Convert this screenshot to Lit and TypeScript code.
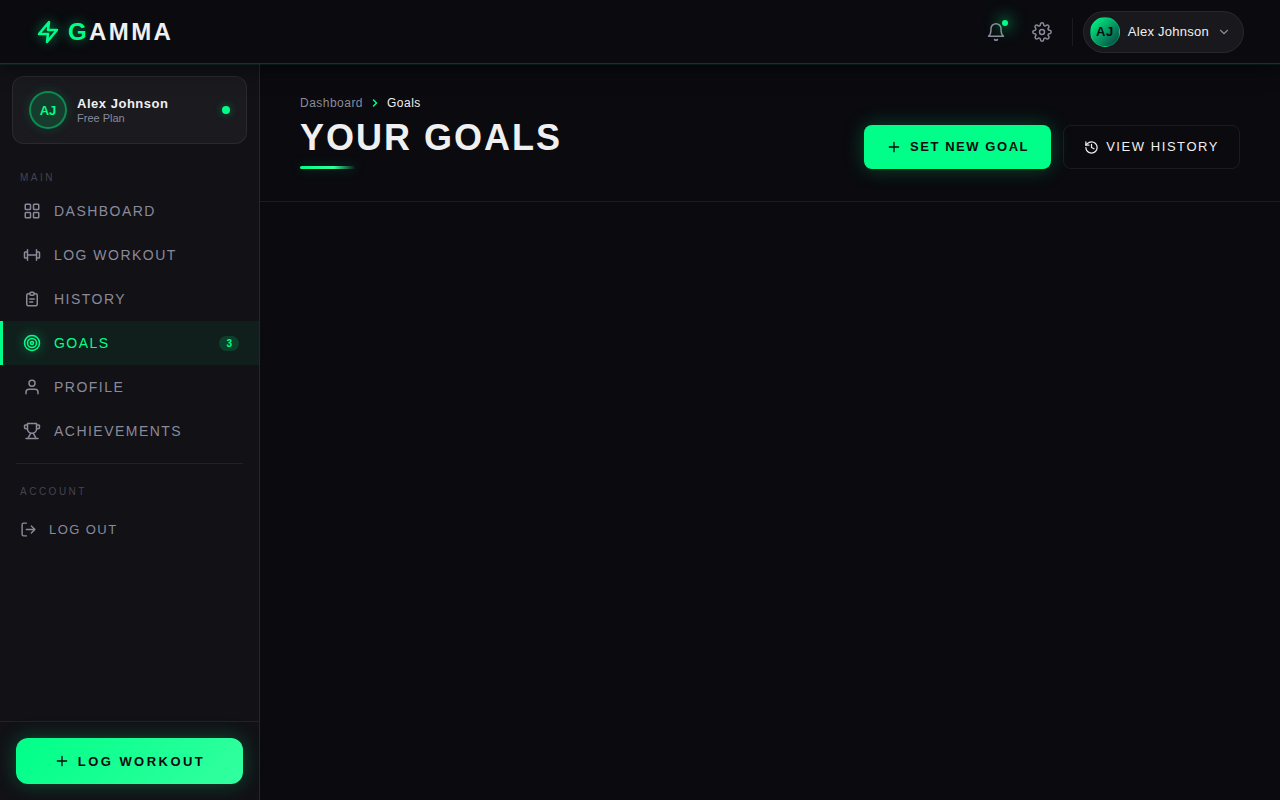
import { LitElement, html, css, svg, nothing } from "lit";
import { customElement, property, state } from "lit/decorators.js";
import { classMap } from "lit/directives/class-map.js";

const icons: Record<string, unknown> = {
  bolt: svg`<path d="M13 2 3 14h9l-1 8 10-12h-9l1-8z"/>`,
  bell: svg`<path d="M18 8A6 6 0 0 0 6 8c0 7-3 9-3 9h18s-3-2-3-9"/><path d="M13.73 21a2 2 0 0 1-3.46 0"/>`,
  gear: svg`<circle cx="12" cy="12" r="3"/><path d="M19.4 15a1.65 1.65 0 0 0 .33 1.82l.06.06a2 2 0 0 1 0 2.83 2 2 0 0 1-2.83 0l-.06-.06a1.65 1.65 0 0 0-1.82-.33 1.65 1.65 0 0 0-1 1.51V21a2 2 0 0 1-2 2 2 2 0 0 1-2-2v-.09A1.65 1.65 0 0 0 9 19.4a1.65 1.65 0 0 0-1.82.33l-.06.06a2 2 0 0 1-2.83 0 2 2 0 0 1 0-2.83l.06-.06a1.65 1.65 0 0 0 .33-1.82 1.65 1.65 0 0 0-1.51-1H3a2 2 0 0 1-2-2 2 2 0 0 1 2-2h.09A1.65 1.65 0 0 0 4.6 9a1.65 1.65 0 0 0-.33-1.82l-.06-.06a2 2 0 0 1 0-2.83 2 2 0 0 1 2.83 0l.06.06a1.65 1.65 0 0 0 1.82.33H9a1.65 1.65 0 0 0 1-1.51V3a2 2 0 0 1 2-2 2 2 0 0 1 2 2v.09a1.65 1.65 0 0 0 1 1.51 1.65 1.65 0 0 0 1.82-.33l.06-.06a2 2 0 0 1 2.83 0 2 2 0 0 1 0 2.83l-.06.06a1.65 1.65 0 0 0-.33 1.82V9a1.65 1.65 0 0 0 1.51 1H21a2 2 0 0 1 2 2 2 2 0 0 1-2 2h-.09a1.65 1.65 0 0 0-1.51 1z"/>`,
  down: svg`<path d="m6 9 6 6 6-6"/>`,
  right: svg`<path d="m9 18 6-6-6-6"/>`,
  grid: svg`<rect x="3" y="3" width="7" height="7" rx="1"/><rect x="14" y="3" width="7" height="7" rx="1"/><rect x="3" y="14" width="7" height="7" rx="1"/><rect x="14" y="14" width="7" height="7" rx="1"/>`,
  dumbbell: svg`<path d="M6 5v14M18 5v14M6 12h12M6 8H3a1 1 0 0 0-1 1v6a1 1 0 0 0 1 1h3M18 8h3a1 1 0 0 1 1 1v6a1 1 0 0 1-1 1h-3"/>`,
  clipboard: svg`<path d="M9 5H7a2 2 0 0 0-2 2v12a2 2 0 0 0 2 2h10a2 2 0 0 0 2-2V7a2 2 0 0 0-2-2h-2"/><rect x="9" y="3" width="6" height="4" rx="2"/><path d="M9 12h6M9 16h4"/>`,
  target: svg`<circle cx="12" cy="12" r="10"/><circle cx="12" cy="12" r="6"/><circle cx="12" cy="12" r="2"/>`,
  user: svg`<path d="M20 21v-2a4 4 0 0 0-4-4H8a4 4 0 0 0-4 4v2"/><circle cx="12" cy="7" r="4"/>`,
  trophy: svg`<path d="M6 4H3a1 1 0 0 0-1 1v2a2 2 0 0 0 2 2h2M18 4h3a1 1 0 0 1 1 1v2a2 2 0 0 1-2 2h-2M4 22h16M10 15c0 3-3 3-3 7M14 15c0 3 3 3 3 7M18 2H6v7a6 6 0 0 0 12 0V2z"/>`,
  logout: svg`<path d="M9 21H5a2 2 0 0 1-2-2V5a2 2 0 0 1 2-2h4"/><path d="m16 17 5-5-5-5M21 12H9"/>`,
  plus: svg`<path d="M12 5v14M5 12h14"/>`,
  history: svg`<path d="M3 12a9 9 0 1 0 9-9 9.750 9.750 0 0 0-6.740 2.740L3 8"/><path d="M3 3v5h5M12 7v5l4 2"/>`,
};

@customElement("ui-icon")
class UiIcon extends LitElement {
  @property() name = "";
  @property({ type: Number }) size = 18;
  @property({ type: Number }) weight = 2;

  static styles = css`
    :host { display: inline-flex; flex: none; }
    svg { display: block; fill: none; stroke: currentColor; stroke-linecap: round; stroke-linejoin: round; }
  `;

  render() {
    return html`<svg width=${this.size} height=${this.size} viewBox="0 0 24 24" stroke-width=${this.weight} aria-hidden="true">${icons[this.name]}</svg>`;
  }
}

const links = [
  { id: "dashboard", label: "Dashboard", icon: "grid" },
  { id: "log", label: "Log Workout", icon: "dumbbell" },
  { id: "history", label: "History", icon: "clipboard" },
  { id: "goals", label: "Goals", icon: "target", count: 3 },
  { id: "profile", label: "Profile", icon: "user" },
  { id: "achievements", label: "Achievements", icon: "trophy" },
];

@customElement("app-root")
class AppRoot extends LitElement {
  @state() current = "goals";

  static styles = css`
    :host {
      --neon: #00ff88;
      --bg: #0a0a0f;
      --panel: #111116;
      --text: #f0f0f0;
      --muted: #8a8a9a;
      --line: rgba(255, 255, 255, 0.07);
      display: grid;
      grid-template: auto 1fr / 260px 1fr;
      min-height: 100vh;
      background: var(--bg);
      color: var(--text);
      font-family: "Liberation Sans", Arial, sans-serif;
      font-size: 13px;
    }
    * { box-sizing: border-box; }
    a { color: inherit; text-decoration: none; }
    button { font: inherit; color: inherit; border: 0; background: none; padding: 0; cursor: pointer; }

    .topbar {
      grid-column: 1 / -1;
      z-index: 1;
      display: flex;
      align-items: center;
      justify-content: space-between;
      height: 64px;
      padding: 0 36px;
      background: var(--bg);
      border-bottom: 1px solid rgba(0, 255, 136, 0.2);
      box-shadow: 0 1px 0 rgba(0, 255, 136, 0.07), 0 4px 24px rgba(0, 0, 0, 0.4);
    }
    .brand { display: flex; align-items: center; gap: 8px; font-size: 24px; font-weight: 700; letter-spacing: 0.1em; }
    .brand ui-icon { color: var(--neon); filter: drop-shadow(0 0 6px rgba(0, 255, 136, 0.6)); }
    .brand .first { color: var(--neon); text-shadow: 0 0 12px rgba(0, 255, 136, 0.5); }
    .tools { display: flex; align-items: center; gap: 6px; }
    .tool { position: relative; display: grid; place-items: center; width: 40px; height: 40px; color: var(--muted); }
    .alert {
      position: absolute; top: 8px; right: 8px; width: 6px; height: 6px; border-radius: 50%;
      background: var(--neon); box-shadow: 0 0 16px 4px rgba(0, 255, 136, 0.4), 0 0 8px rgba(0, 255, 136, 0.3);
    }
    .rule { width: 1px; height: 28px; margin: 0 4px; background: var(--line); }
    .account {
      display: flex; align-items: center; gap: 8px; padding: 5px 12px 5px 6px;
      border: 1px solid var(--line); border-radius: 24px; background: #18181d; letter-spacing: 0.02em;
    }
    .account > ui-icon { color: var(--muted); }
    .avatar {
      display: grid; place-items: center; width: 30px; height: 30px; border-radius: 50%;
      background: linear-gradient(135deg, var(--neon), #0a3a3f);
      border: 1px solid rgba(0, 255, 136, 0.3);
      color: var(--bg); font-weight: 700; letter-spacing: 0.04em;
    }

    .sidebar {
      display: flex; flex-direction: column; background: var(--panel);
      border-right: 1px solid rgba(0, 255, 136, 0.15);
    }
    .card {
      display: flex; align-items: center; gap: 10px; margin: 12px; padding: 14px 16px;
      background: #1a1a1f; border: 1px solid var(--line); border-radius: 12px;
    }
    .card .avatar {
      width: 38px; height: 38px; color: var(--neon); letter-spacing: 0;
      background: rgba(0, 255, 136, 0.15); border: 2px solid rgba(0, 255, 136, 0.4);
      box-shadow: 0 0 12px rgba(0, 255, 136, 0.15);
    }
    .person { flex: 1; display: grid; }
    .name { font-weight: 700; letter-spacing: 0.04em; line-height: 15px; }
    .plan { font-size: 11px; line-height: 14px; color: var(--muted); }
    .online { width: 8px; height: 8px; border-radius: 50%; background: var(--neon); box-shadow: 0 0 8px rgba(0, 255, 136, 0.4); }

    .heading { margin: 0; padding: 16px 20px 5px; font-size: 10px; font-weight: 400; line-height: 12px; letter-spacing: 0.25em; text-transform: uppercase; color: #44444f; }
    .link {
      display: flex; align-items: center; gap: 13px; height: 44px; padding: 0 20px;
      border-left: 3px solid transparent; color: var(--muted);
      font-size: 14px; letter-spacing: 0.105em; text-transform: uppercase;
    }
    .link.on { color: var(--neon); background: rgba(0, 255, 136, 0.06); border-left-color: var(--neon); }
    .link.on ui-icon { filter: drop-shadow(0 0 6px rgba(0, 255, 136, 0.5)); }
    .count {
      margin-left: auto; padding: 0 7px; border-radius: 8px; font-size: 10px; font-weight: 700; line-height: 15px;
      letter-spacing: 0; background: rgba(0, 255, 136, 0.15);
    }
    .split { height: 1px; margin: 10px 16px 6px; border: 0; background: var(--line); }
    .logout {
      display: flex; align-items: center; gap: 12px; width: 100%; height: 44px; padding: 0 20px;
      margin-top: 4px; color: var(--muted); letter-spacing: 0.11em; text-transform: uppercase;
    }
    .bottom { margin-top: auto; padding: 16px; border-top: 1px solid var(--line); }

    .button {
      display: flex; align-items: center; justify-content: center; gap: 8px; height: 44px; padding: 0 22px;
      border-radius: 8px; line-height: 16px; letter-spacing: 0.12em; text-transform: uppercase; white-space: nowrap;
    }
    .primary { background: var(--neon); color: var(--bg); font-weight: 700; box-shadow: 0 0 20px rgba(0, 255, 136, 0.25); }
    .outline { gap: 7px; padding: 0 20px; border: 1px solid var(--line); }
    .wide {
      width: 100%; height: 46px; border-radius: 12px; line-height: 15px; letter-spacing: 0.19em;
      background: linear-gradient(135deg, var(--neon), #33ffa0);
    }

    .page-head {
      display: flex; flex-wrap: wrap; align-items: flex-end; justify-content: space-between; gap: 16px;
      padding: 32px 40px; border-bottom: 1px solid rgba(0, 255, 136, 0.12);
    }
    .crumbs { display: flex; align-items: center; gap: 6px; margin-bottom: 8px; font-size: 12px; line-height: 14px; letter-spacing: 0.04em; color: var(--muted); }
    .crumbs ui-icon { color: var(--neon); }
    .crumbs .here { color: var(--text); }
    h1 { margin: 0; font-size: 36px; line-height: 40px; letter-spacing: 2px; text-transform: uppercase; }
    .accent {
      width: 56px; height: 3px; margin-top: 8px; border-radius: 2px;
      background: linear-gradient(90deg, var(--neon), #33ffa0 60%, transparent);
      box-shadow: 0 0 12px rgba(0, 255, 136, 0.25);
    }
    .actions { display: flex; gap: 12px; }
  `;

  render() {
    return html`
      <header class="topbar">
        <a class="brand" href="#"><ui-icon name="bolt" size="24" weight="2.5"></ui-icon><span><span class="first">G</span>AMMA</span></a>
        <div class="tools">
          <button class="tool" aria-label="Notifications"><ui-icon name="bell" size="20" weight="1.8"></ui-icon><span class="alert"></span></button>
          <button class="tool" aria-label="Settings"><ui-icon name="gear" size="20" weight="1.8"></ui-icon></button>
          <span class="rule"></span>
          <button class="account"><span class="avatar">AJ</span><span>Alex Johnson</span><ui-icon name="down" size="14"></ui-icon></button>
        </div>
      </header>

      <aside class="sidebar">
        <div class="card">
          <span class="avatar">AJ</span>
          <div class="person"><span class="name">Alex Johnson</span><span class="plan">Free Plan</span></div>
          <span class="online"></span>
        </div>
        <nav aria-label="Main">
          <h2 class="heading">Main</h2>
          ${links.map((l) => html`
            <a class=${classMap({ link: true, on: l.id === this.current })} href="#${l.id}" @click=${() => (this.current = l.id)}>
              <ui-icon name=${l.icon}></ui-icon><span>${l.label}</span>
              ${l.count ? html`<span class="count">${l.count}</span>` : nothing}
            </a>`)}
        </nav>
        <hr class="split" />
        <h2 class="heading">Account</h2>
        <button class="logout"><ui-icon name="logout" size="17"></ui-icon>Log Out</button>
        <div class="bottom">
          <button class="button primary wide"><ui-icon name="plus" size="16"></ui-icon>Log Workout</button>
        </div>
      </aside>

      <main>
        <div class="page-head">
          <div>
            <nav class="crumbs" aria-label="Breadcrumb"><a href="#dashboard">Dashboard</a><ui-icon name="right" size="12" weight="3"></ui-icon><span class="here">Goals</span></nav>
            <h1>Your Goals</h1>
            <div class="accent"></div>
          </div>
          <div class="actions">
            <button class="button primary"><ui-icon name="plus" size="16"></ui-icon>Set New Goal</button>
            <button class="button outline"><ui-icon name="history" size="15"></ui-icon>View History</button>
          </div>
        </div>
      </main>
    `;
  }
}
